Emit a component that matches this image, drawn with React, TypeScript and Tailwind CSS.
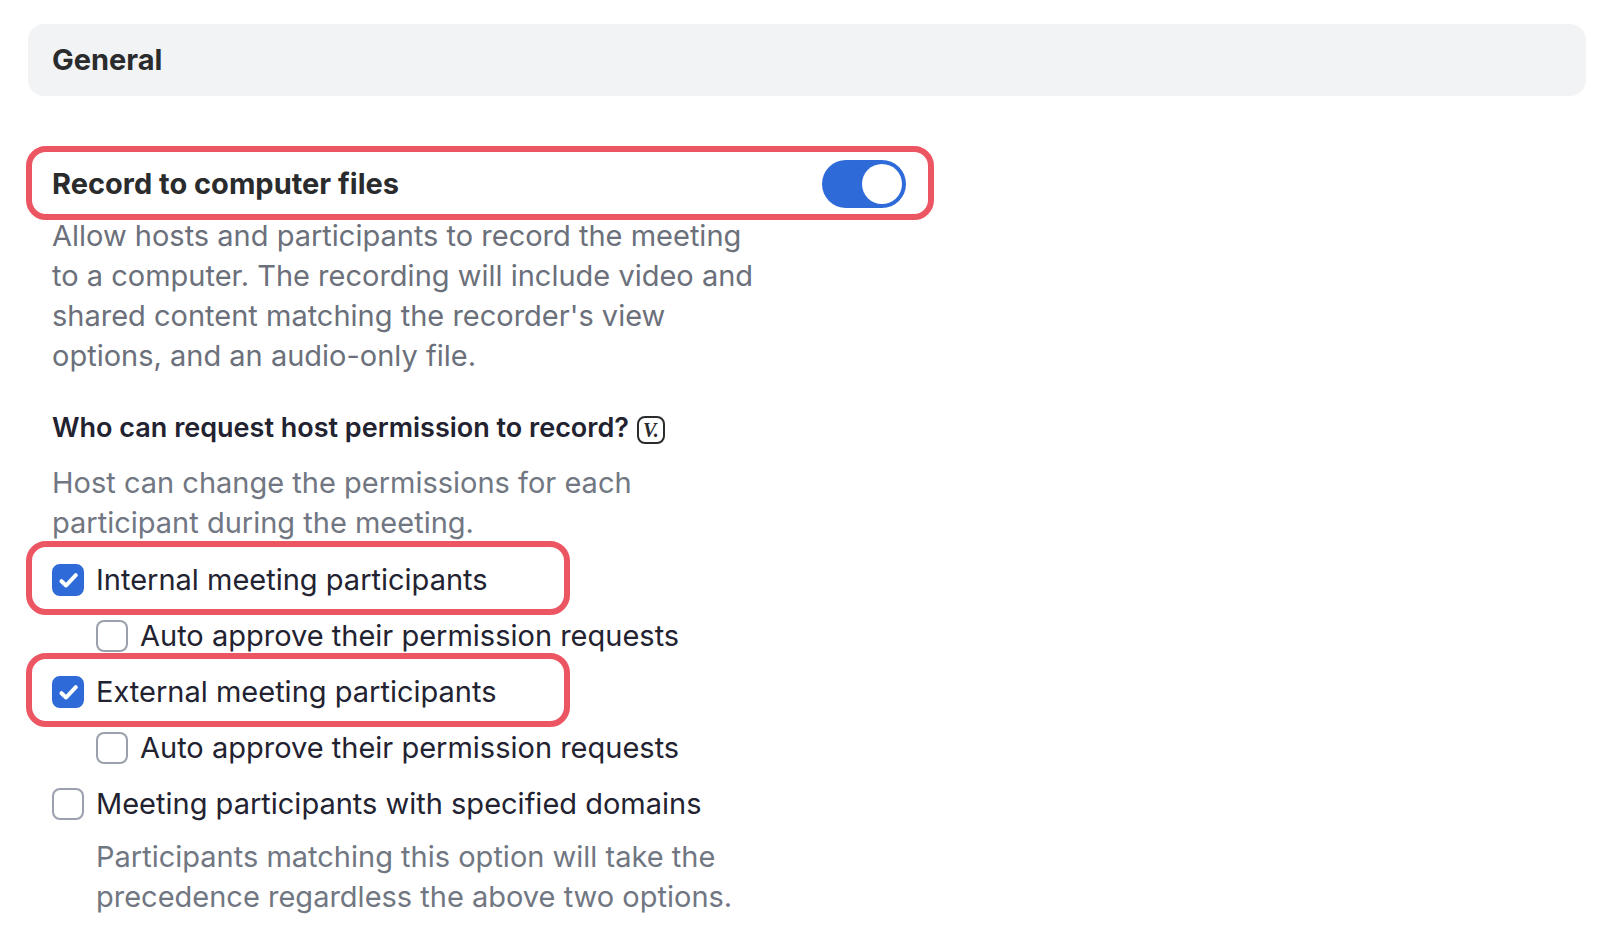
import { useState } from 'react'
import { clsx } from 'clsx'

const options = [
  { id: 'internal', label: 'Internal meeting participants', checked: true, nested: false, highlight: true },
  { id: 'internal-auto', label: 'Auto approve their permission requests', checked: false, nested: true, highlight: false },
  { id: 'external', label: 'External meeting participants', checked: true, nested: false, highlight: true },
  { id: 'external-auto', label: 'Auto approve their permission requests', checked: false, nested: true, highlight: false },
  { id: 'domains', label: 'Meeting participants with specified domains', checked: false, nested: false, highlight: false },
]

// Red callout drawn over the row it belongs to
function Highlight({ className }: { className: string }) {
  return (
    <span
      aria-hidden="true"
      className={clsx('pointer-events-none absolute rounded-[20px] border-6 border-[#ec5662]', className)}
    />
  )
}

function Toggle({ id, checked, onChange }: { id: string; checked: boolean; onChange: () => void }) {
  return (
    <span className="relative flex h-12 w-21 shrink-0">
      <input
        id={id}
        type="checkbox"
        role="switch"
        checked={checked}
        onChange={onChange}
        className="peer h-12 w-21 cursor-pointer appearance-none rounded-full bg-[#9aa0ac] checked:bg-[#2f6bd8]"
      />
      <span className="pointer-events-none absolute top-1 left-1 size-10 rounded-full bg-white peer-checked:left-10" />
    </span>
  )
}

function OptionRow({ option }: { option: (typeof options)[number] }) {
  const [checked, setChecked] = useState(option.checked)

  return (
    <li className={clsx('relative flex h-10 items-center gap-3', option.nested && 'pl-11')}>
      <span className="relative flex size-8 shrink-0">
        <input
          id={option.id}
          type="checkbox"
          checked={checked}
          onChange={() => setChecked(!checked)}
          className="size-8 cursor-pointer appearance-none rounded-lg border-2 border-[#9aa0ac] bg-white checked:border-[#2f6bd8] checked:bg-[#2f6bd8]"
        />
        {checked && (
          <svg viewBox="0 0 32 32" fill="none" className="pointer-events-none absolute inset-0 size-8">
            <path d="M9.5 17.2l4.6 4.3L23.8 11.2" stroke="#fff" strokeWidth="4" strokeLinecap="round" strokeLinejoin="round" />
          </svg>
        )}
      </span>
      <label htmlFor={option.id} className="cursor-pointer text-[#222230]">
        {option.label}
      </label>
      {option.highlight && <Highlight className="-top-[19px] -left-[26px] h-[74px] w-[544px]" />}
    </li>
  )
}

export default function App() {
  const [recording, setRecording] = useState(true)

  return (
    <main className="min-h-screen bg-white pt-6 pr-[22px] pb-2 pl-7 font-['Inter',sans-serif] text-[29px] leading-10">
      <header className="flex h-18 items-center rounded-2xl bg-[#f2f3f5] px-6">
        <h1 className="font-bold text-[#2a2b2d]">General</h1>
      </header>

      <section className="mt-16 max-w-[878px] pl-6">
        <div className="relative flex items-center justify-between">
          <label htmlFor="record" className="font-bold text-[#2a2b2d]">
            Record to computer files
          </label>
          <Toggle id="record" checked={recording} onChange={() => setRecording(!recording)} />
          <Highlight className="-top-[14px] -right-7 -left-[26px] h-[74px]" />
        </div>
        <p className="mt-2 text-[#6b707b]">
          Allow hosts and participants to record the meeting
          <br />
          to a computer. The recording will include video and
          <br />
          shared content matching the recorder's view
          <br />
          options, and an audio-only file.
        </p>

        <div className="mt-8 flex items-center gap-2">
          <h2 className="text-[27px] font-semibold text-[#222230]">Who can request host permission to record?</h2>
          <span className="mt-1 flex size-7 items-center justify-center rounded-lg border-2 border-[#2a2b2d] font-['Liberation_Serif',serif] text-xl leading-none font-semibold text-[#2a2b2d] italic">
            V.
          </span>
        </div>
        <p className="mt-[15px] text-[#717782]">
          Host can change the permissions for each
          <br />
          participant during the meeting.
        </p>

        <ul className="mt-[17px] flex flex-col gap-4">
          {options.map((option) => (
            <OptionRow key={option.id} option={option} />
          ))}
        </ul>
        <p className="mt-[13px] pl-11 text-[#717782]">
          Participants matching this option will take the
          <br />
          precedence regardless the above two options.
        </p>
      </section>
    </main>
  )
}
